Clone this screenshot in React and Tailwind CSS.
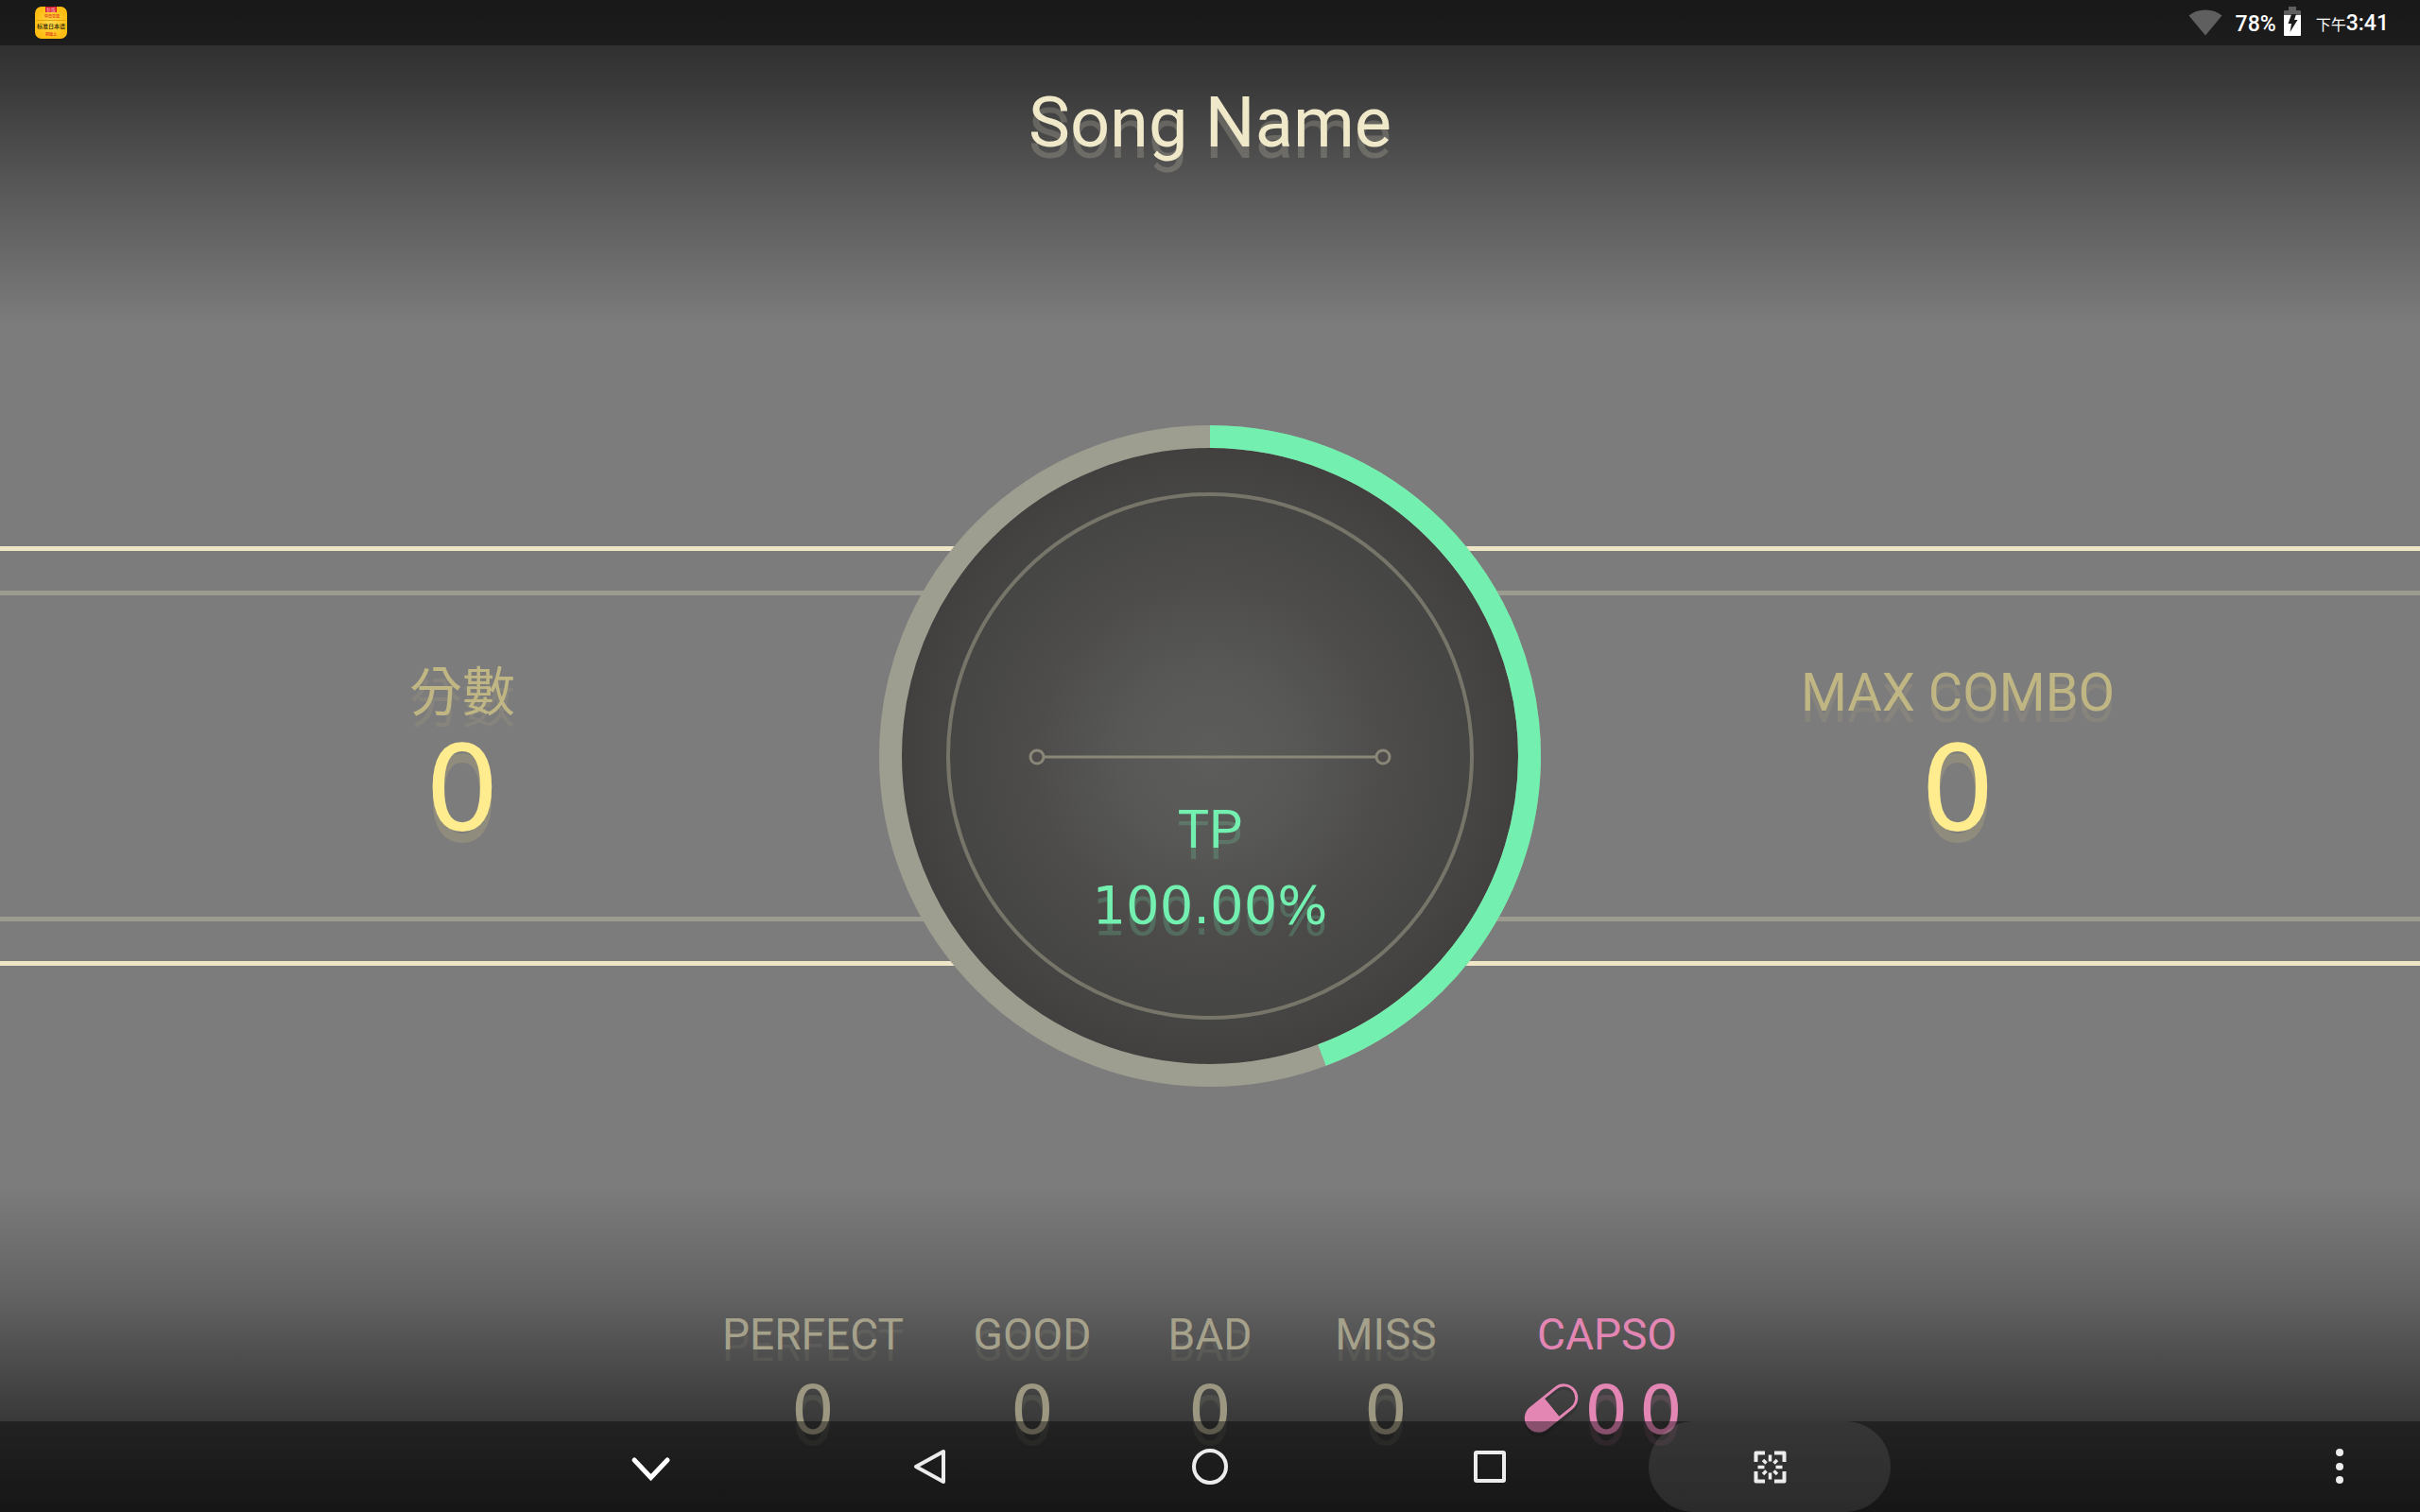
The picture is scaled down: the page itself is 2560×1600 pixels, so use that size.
const counters = [
  { label: 'PERFECT', value: 0, width: 'w-[196px]' },
  { label: 'GOOD', value: 0, width: 'w-32' },
  { label: 'BAD', value: 0, width: 'w-[108px]' },
  { label: 'MISS', value: 0, width: 'w-[124px]' },
];

const tpArc = 0.443;

const AppIcon = () => (
  <svg className="size-[34px]" viewBox="0 0 34 34" role="img" aria-label="標準日本語">
    <defs>
      <radialGradient id="cover">
        <stop offset="0" stopColor="#ffd84a" />
        <stop offset="1" stopColor="#fdbd12" />
      </radialGradient>
    </defs>
    <rect width="34" height="34" rx="7" fill="url(#cover)" />
    <rect x="11" width="12" height="6" fill="#d8162c" />
    <path d="M2 14.5h30" stroke="#e0a010" strokeWidth="1" />
    <g fontFamily="'Noto Sans CJK SC', sans-serif" textAnchor="middle">
      <text x="17" y="5" fontSize="5" fill="#f6c9c9">新版</text>
      <text x="18" y="12" fontSize="4" fontWeight="700" fill="#e0401c">中日交流</text>
      <text x="17" y="23" fontSize="6" fontWeight="500" fill="#2b1d05">标准日本语</text>
      <text x="17" y="31" fontSize="4" fontWeight="700" fill="#e2471b">初级上</text>
    </g>
  </svg>
);

const StatusBar = () => (
  <div className="flex h-12 items-center justify-between bg-black/40 pr-[33px] pl-[37px]">
    <AppIcon />
    <div className="flex items-center text-[23px] leading-8 font-medium text-white">
      <svg className="mr-[14px] h-7 w-9" viewBox="0 0 36 28" aria-label="Wi-Fi">
        <path d="M18 27.5L0.5 6.5C5 2.500 11 0.500 18 0.500s13 2 17.500 6z" fill="#5f5f5f" />
      </svg>
      <span className="pt-1">78%</span>
      <svg className="mr-4 mb-[2px] ml-2 h-8 w-[18px]" viewBox="0 0 18 32" aria-label="Charging">
        <path d="M5 0h8v4h4a1 1 0 0 1 1 1v5H0V5a1 1 0 0 1 1-1h4z" fill="#5f5f5f" />
        <path d="M0 9h18v21a1 1 0 0 1-1 1H1a1 1 0 0 1-1-1z" fill="#fff" />
        <path d="M8 8h5l-2 6h3.500L6.500 27l1.500-9H4.500z" fill="#1c1c1c" />
      </svg>
      <span className="pt-1">
        <span className="text-[16px] font-normal">下午</span>3:41
      </span>
    </div>
  </div>
);

const Stat = ({ label, value }) => (
  <div className="flex flex-col items-center gap-[14px] pb-2">
    <div className="text-[56px] leading-16 text-[#c0b683] [text-shadow:0_12px_0_#c0b68326]">
      {label}
    </div>
    <div className="font-['DejaVu_Sans',sans-serif] text-[124px] leading-28 text-[#feec8f] [text-shadow:0_12px_0_#feec8f26]">
      {value}
    </div>
  </div>
);

const Dial = () => (
  <div className="grid w-[700px] justify-items-center">
    <svg className="col-start-1 row-start-1 size-[700px]" viewBox="0 0 700 700" fill="none">
      <defs>
        <radialGradient id="face">
          <stop offset="0" stopColor="#5d5d5b" />
          <stop offset="0.3" stopColor="#575755" />
          <stop offset="0.6" stopColor="#4c4b4a" />
          <stop offset="0.82" stopColor="#464644" />
          <stop offset="1" stopColor="#42403e" />
        </radialGradient>
      </defs>
      <circle cx="350" cy="350" r="328" fill="url(#face)" />
      <circle cx="350" cy="350" r="338" stroke="#9d9d90" strokeWidth="24" />
      <circle
        cx="350"
        cy="350"
        r="338"
        stroke="#73efb0"
        strokeWidth="24"
        pathLength="1"
        strokeDasharray={`${tpArc} 1`}
        transform="rotate(-90 350 350)"
      />
      <circle cx="350" cy="350" r="277" stroke="#77756a" strokeWidth="4" />
      <g stroke="#8a8778" strokeWidth="3">
        <path d="M175 351h350" />
        <circle cx="167" cy="351" r="7" />
        <circle cx="533" cy="351" r="7" />
      </g>
    </svg>
    <div className="col-start-1 row-start-1 pt-[388px] text-center text-[56px] leading-20 text-[#73efb0] [text-shadow:0_12px_0_#73efb033]">
      <div>TP</div>
      <div className="font-['DejaVu_Sans',sans-serif]">100.00%</div>
    </div>
  </div>
);

const Capsule = () => (
  <svg className="h-14 w-[58px]" viewBox="0 0 58 56" aria-hidden="true">
    <g transform="translate(29 30) rotate(-39)" fill="none" stroke="#000" strokeOpacity="0.12" strokeWidth="3">
      <rect x="-31" y="-14" width="62" height="28" rx="14" />
    </g>
    <g transform="translate(29 26) rotate(-39)">
      <rect x="-30.500" y="-13.500" width="61" height="27" rx="13.500" fill="none" stroke="#e386b4" strokeWidth="3" />
      <path d="M1-14H-17a14 14 0 0 0 0 28H1z" fill="#e386b4" />
    </g>
  </svg>
);

const Counters = () => (
  <div className="flex gap-[70px] pl-1 text-center text-[46px] leading-16 text-[#a5a18b]">
    {counters.map((c) => (
      <div key={c.label} className={`flex flex-col items-center gap-2 ${c.width}`}>
        <div className="[text-shadow:0_12px_0_#a5a18b26]">{c.label}</div>
        <div className="font-['DejaVu_Sans',sans-serif] text-[72px] leading-20 text-[#9b9780] [text-shadow:0_12px_0_#9b978026]">
          {c.value}
        </div>
      </div>
    ))}
    <div className="flex w-[204px] flex-col items-center gap-2 text-[#e386b4]">
      <div>CAPSO</div>
      <div className="flex items-center pr-2 font-['DejaVu_Sans',sans-serif] text-[72px] leading-20 [text-shadow:0_12px_0_#e386b426]">
        <Capsule />
        <span className="ml-[6px]">0</span>
        <span className="ml-3">0</span>
      </div>
    </div>
  </div>
);

const NavButton = ({ label, active, children }) => (
  <button
    type="button"
    aria-label={label}
    className={`flex h-24 w-64 items-center justify-center rounded-full ${active ? 'bg-white/9' : ''}`}
  >
    <svg className="size-12" viewBox="0 0 48 48" fill="none" stroke="#ececec" strokeWidth="4">
      {children}
    </svg>
  </button>
);

const NavBar = () => (
  <nav className="fixed inset-x-0 bottom-0 grid h-24 grid-cols-[1fr_auto_1fr] items-center bg-black/40">
    <div className="col-start-2 flex gap-10">
      <NavButton label="Hide">
        <path d="M7 17L24.500 35.500L42 17" stroke="#fff" strokeWidth="5" strokeLinecap="round" />
      </NavButton>
      <NavButton label="Back">
        <path d="M38 8V40L9 24z" strokeLinejoin="round" />
      </NavButton>
      <NavButton label="Home">
        <circle cx="24" cy="24" r="17" />
      </NavButton>
      <NavButton label="Recents">
        <rect x="9" y="9" width="30" height="30" rx="1" />
      </NavButton>
      <NavButton label="Screenshot" active>
        <path d="M9.500 19V9.500H19M29 9.500h10.500V19M39.500 29v10.500H29M19 39.500H9.500V29" strokeLinejoin="round" />
        <path
          d="M24.500 11.500v7M24.500 30.500v7M11.500 24.500h7M30.500 24.500h7M17 17l3.500 3.500M28.500 28.500l3.500 3.500M32 17l-3.500 3.500M20.500 28.500l-3.500 3.500"
          strokeWidth="3.500"
        />
      </NavButton>
    </div>
    <button type="button" aria-label="More options" className="mr-[53px] flex h-24 w-16 items-center justify-center justify-self-end">
      <svg className="h-10 w-2" viewBox="0 0 8 40" fill="#ececec">
        <circle cx="4" cy="5" r="4" />
        <circle cx="4" cy="20" r="4" />
        <circle cx="4" cy="34" r="4" />
      </svg>
    </button>
  </nav>
);

const App = () => {
  return (
    <div className="grid min-h-screen grid-cols-1 grid-rows-[1fr_auto_1fr] overflow-hidden bg-[linear-gradient(#292929,#303030_3%,#373737_5%,#585858_12.5%,#7c7c7c_21.5%,#7c7c7c_78.5%,#636363_85.5%,#3b3b3b_93.5%,#252525)] font-[Roboto,'Noto_Sans_CJK_TC',sans-serif]">
      <header>
        <StatusBar />
        <h1 className="pt-[34px] text-center text-[74px] leading-24 text-[#efe8c9] [text-shadow:0_12px_0_#efe8c933]">
          Song Name
        </h1>
      </header>

      <main className="grid grid-cols-1 items-center">
        {/* rails that run behind the dial */}
        <div className="col-start-1 row-start-1 flex h-[444px] flex-col border-y-[5px] border-[#efe6c8] py-[42px]">
          <div className="grow border-y-[5px] border-[#9c9b8f]" />
        </div>
        <div className="col-start-1 row-start-1 grid grid-cols-[1fr_auto_1fr] items-center">
          <div className="pl-12">
            <Stat label="分數" value={0} />
          </div>
          <Dial />
          <div className="pr-12">
            <Stat label="MAX COMBO" value={0} />
          </div>
        </div>
      </main>

      <footer className="flex items-end justify-center pb-[68px]">
        <Counters />
      </footer>

      <NavBar />
    </div>
  );
};

export default App;
